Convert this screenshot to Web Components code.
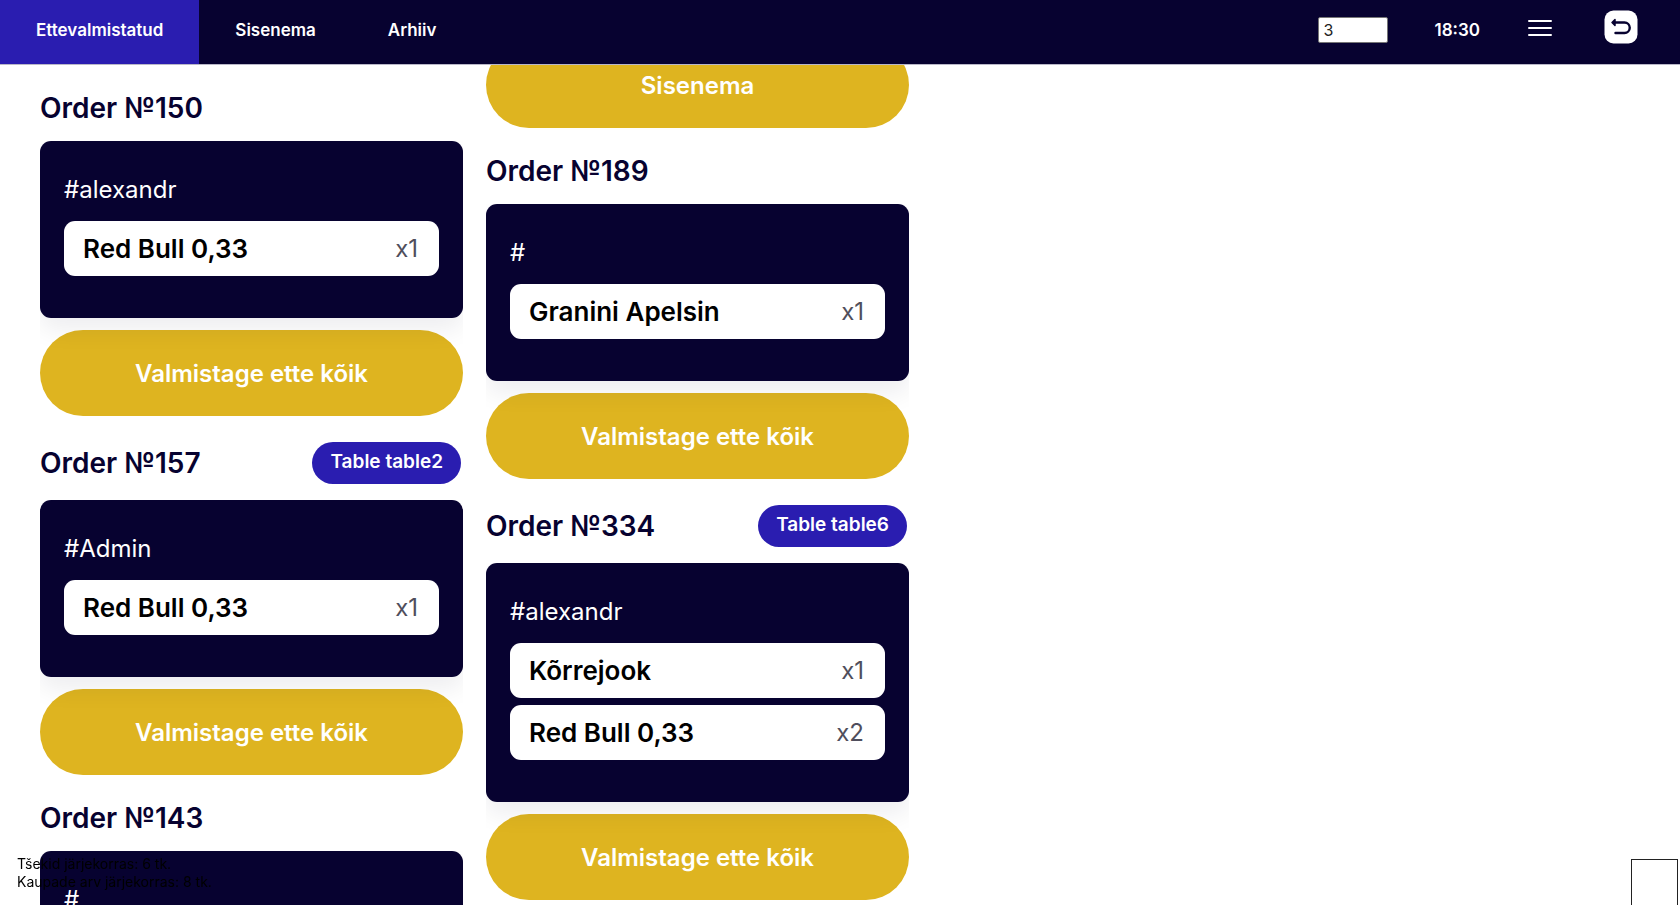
<!DOCTYPE html>
<html lang="et">
<head>
<meta charset="utf-8">
<title>Ettevalmistatud</title>
<style>
  :root {
    --navy: #070230;
    --blue: #2a1db0;
    --gold: #deb420;
  }
  body {
    margin: 0;
    height: 100vh;
    overflow: hidden;
    display: flex;
    flex-direction: column;
    background: #fff;
    font-family: Inter, "Liberation Sans", sans-serif;
  }
</style>
</head>
<body>
<kds-header>
  <kds-tab active>Ettevalmistatud</kds-tab>
  <kds-tab>Sisenema</kds-tab>
  <kds-tab>Arhiiv</kds-tab>
  <kds-tools slot="tools" time="18:30" columns="3"></kds-tools>
</kds-header>

<kds-board>
  <kds-column>
    <kds-order number="150" owner="alexandr">
      <kds-item qty="1">Red Bull 0,33</kds-item>
      <kds-action slot="action">Valmistage ette kõik</kds-action>
    </kds-order>
    <kds-order number="157" owner="Admin" table="table2">
      <kds-item qty="1">Red Bull 0,33</kds-item>
      <kds-action slot="action">Valmistage ette kõik</kds-action>
    </kds-order>
    <kds-order number="143" owner="">
    </kds-order>
  </kds-column>
  <kds-column scrolled>
    <kds-action>Sisenema</kds-action>
    <kds-order number="189" owner="">
      <kds-item qty="1">Granini Apelsin</kds-item>
      <kds-action slot="action">Valmistage ette kõik</kds-action>
    </kds-order>
    <kds-order number="334" owner="alexandr" table="table6">
      <kds-item qty="1">Kõrrejook</kds-item>
      <kds-item qty="2">Red Bull 0,33</kds-item>
      <kds-action slot="action">Valmistage ette kõik</kds-action>
    </kds-order>
  </kds-column>
</kds-board>

<kds-summary>
  <div>Tšekid järjekorras: 6 tk.</div>
  <div>Kaupade arv järjekorras: 8 tk.</div>
</kds-summary>
<kds-frame></kds-frame>

<script>
const define = (name, render) => customElements.define(name, class extends HTMLElement {
  constructor() {
    super();
    this.attachShadow({ mode: 'open' });
  }
  connectedCallback() {
    this.shadowRoot.innerHTML = render(this);
  }
});

define('kds-header', () => `
  <style>
    :host { display: block; flex: none; position: relative; z-index: 2; }
    header {
      display: flex; justify-content: space-between;
      height: 64px; background: var(--navy); color: #fff;
      border-bottom: 1px solid #b9b7c8;
    }
    nav { display: flex; }
  </style>
  <header><nav><slot></slot></nav><slot name="tools"></slot></header>`);

define('kds-tab', el => `
  <style>
    :host { display: block; }
    a {
      display: block; box-sizing: border-box; height: 64px; padding: 20px 36px 0;
      font-size: 17px; line-height: 20px; font-weight: 600;
      color: #fff; text-decoration: none;
    }
    :host([active]) a { background: var(--blue); }
  </style>
  <a href="#"${el.hasAttribute('active') ? ' aria-current="page"' : ''}><slot></slot></a>`);

define('kds-tools', el => `
  <style>
    :host { display: flex; align-items: flex-start; padding-right: 42px; }
    input {
      box-sizing: border-box; width: 70px; height: 26px; margin: 17px 46px 0 0;
      padding: 0 4px; border: 1px solid #767676; border-radius: 2px;
      background: #fff; color: #222; font: 16px Inter, sans-serif;
    }
    time { margin: 20px 48px 0 0; font-size: 17px; line-height: 20px; font-weight: 600; }
    button { display: block; padding: 0; border: 0; background: none; cursor: pointer; }
    .menu { margin: 16px 52px 0 0; }
    .back { margin-top: 10px; }
    svg { display: block; }
  </style>
  <input type="text" aria-label="Veerud" value="${el.getAttribute('columns')}">
  <time>${el.getAttribute('time')}</time>
  <button class="menu" aria-label="Menüü">
    <svg width="24" height="24" viewBox="0 0 24 24" stroke="#fff" stroke-width="2" stroke-linecap="round">
      <path d="M1 5H23M1 12H23M1 19H23"/>
    </svg>
  </button>
  <button class="back" aria-label="Tagasi">
    <svg width="34" height="34" viewBox="0 0 34 34" fill="none">
      <rect x=".5" y=".5" width="33" height="33" rx="9" fill="#fff"/>
      <path d="M10 12.500H20.500a5.250 5.250 0 0 1 0 10.500H11.500" stroke="#070230" stroke-width="2.400" stroke-linecap="round"/>
      <path d="M8 12.500L11 9.500V15.500Z" fill="#070230" stroke="#070230" stroke-width="1.500" stroke-linejoin="round"/>
    </svg>
  </button>`);

define('kds-board', () => `
  <style>
    :host {
      flex: 1; min-height: 0; overflow: hidden;
      display: grid; grid-template-columns: repeat(2, minmax(0, 423px));
      align-items: start; gap: 23px; padding: 0 40px;
    }
  </style>
  <slot></slot>`);

define('kds-column', () => `
  <style>
    :host { display: flex; flex-direction: column; }
    :host([scrolled]) { margin-top: -23px; }
  </style>
  <slot></slot>`);

define('kds-order', el => `
  <style>
    :host { display: block; }
    header {
      display: flex; align-items: center; justify-content: space-between;
      padding: 26px 2px 16px 0;
    }
    h2 { margin: 0; font-size: 28px; line-height: 34px; font-weight: 600; color: var(--navy); }
    .table {
      box-sizing: border-box; height: 42px; padding: 8px 18px 0; border-radius: 21px;
      background: var(--blue); color: #fff;
      font-size: 19px; line-height: 24px; font-weight: 600;
    }
    section {
      position: relative; box-sizing: border-box;
      padding: 33px 24px 42px; margin-bottom: 12px; border-radius: 11px;
      background: var(--navy); box-shadow: 0 12px 24px rgba(7, 2, 48, .07);
      clip-path: inset(0 0 -40px 0);
    }
    .owner { margin: 0 0 15px; color: #fff; font-size: 24px; line-height: 32px; }
    .items { display: flex; flex-direction: column; gap: 7px; }
  </style>
  <header>
    <h2>Order №${el.getAttribute('number')}</h2>
    ${el.hasAttribute('table') ? `<span class="table">Table ${el.getAttribute('table')}</span>` : ''}
  </header>
  <section>
    <p class="owner">#${el.getAttribute('owner')}</p>
    <div class="items"><slot></slot></div>
  </section>
  <slot name="action"></slot>`);

define('kds-item', el => `
  <style>
    :host {
      display: flex; align-items: center; justify-content: space-between;
      box-sizing: border-box; height: 55px; padding: 0 21px 0 19px;
      border-radius: 11px; background: #fff; color: #000;
      font-size: 26px; line-height: 32px; font-weight: 600;
    }
    .qty { font-size: 24px; font-weight: 400; color: #4f4e5c; }
  </style>
  <span><slot></slot></span><span class="qty">x${el.getAttribute('qty')}</span>`);

define('kds-action', () => `
  <style>
    :host { display: block; }
    button {
      display: block; width: 100%; height: 86px; padding: 2px 0 0; border: 0; border-radius: 43px;
      background: var(--gold); color: #fff; cursor: pointer;
      font: 600 24px/30px Inter, sans-serif;
    }
  </style>
  <button><slot></slot></button>`);

define('kds-summary', () => `
  <style>
    :host {
      display: block; position: fixed; left: 17px; bottom: 14px; z-index: 3;
      font-size: 14px; line-height: 18px; color: #000; pointer-events: none;
    }
  </style>
  <slot></slot>`);

define('kds-frame', () => `
  <style>
    :host {
      display: block; position: fixed; right: 2px; bottom: 0; z-index: 3;
      box-sizing: border-box; width: 47px; height: 46px;
      border: 1px solid #222; border-bottom: 0;
    }
  </style>`);
</script>
</body>
</html>
